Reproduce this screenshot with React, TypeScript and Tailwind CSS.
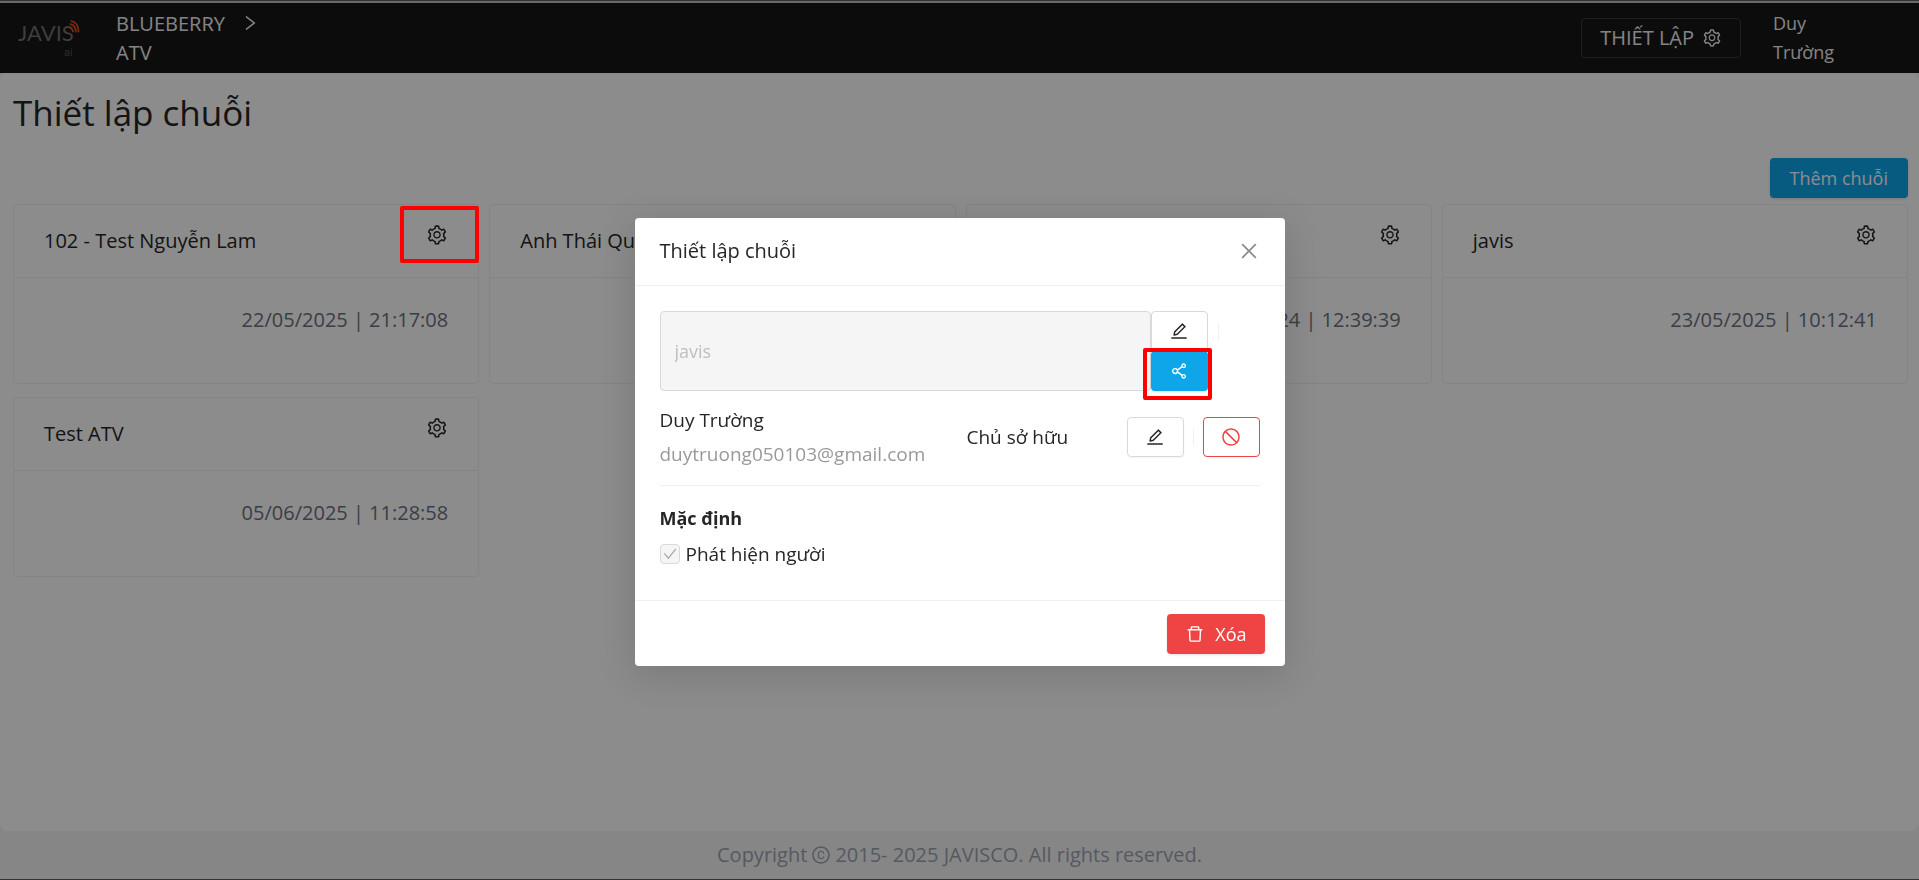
import { useState } from "react";
import {
  AiOutlineCheck,
  AiOutlineClose,
  AiOutlineCopyrightCircle,
  AiOutlineDelete,
  AiOutlineEdit,
  AiOutlineRight,
  AiOutlineSetting,
  AiOutlineShareAlt,
  AiOutlineStop,
} from "react-icons/ai";

type Chain = {
  id: number;
  name: string;
  createdAt: string;
  highlighted?: boolean;
};

const chains: Chain[] = [
  {
    id: 1,
    name: "102 - Test Nguyễn Lam",
    createdAt: "22/05/2025 | 21:17:08",
    highlighted: true,
  },
  { id: 2, name: "Anh Thái Quang", createdAt: "22/05/2025 | 09:20:15" },
  { id: 3, name: "Blueberry", createdAt: "18/12/2024 | 12:39:39" },
  { id: 4, name: "javis", createdAt: "23/05/2025 | 10:12:41" },
  { id: 5, name: "Test ATV", createdAt: "05/06/2025 | 11:28:58" },
];

function Logo() {
  return (
    <svg
      width="64"
      height="40"
      viewBox="0 0 64 40"
      fill="none"
      role="img"
      aria-label="JAVIS ai"
      className="shrink-0"
    >
      <text
        x="0"
        y="23"
        fontSize="22"
        fontFamily="Lato, sans-serif"
        fill="#707070"
      >
        JAVIS
      </text>
      <text
        x="46"
        y="38"
        fontSize="11"
        fontFamily="Roboto, sans-serif"
        fill="#505050"
      >
        ai
      </text>
      <g stroke="#e8491d" strokeWidth="1.8" strokeLinecap="round">
        <path d="M51.5 9.5c2 .6 3.200 2 3.500 4" />
        <path d="M52.500 6.200c3.300 .9 5.200 3.500 5.300 7.300" />
        <path d="M53.500 3c4.500 1.200 7 5 7 10.500" />
      </g>
    </svg>
  );
}

function Header() {
  return (
    <header className="flex h-[70px] items-center bg-[#161616] pb-px text-[#f0f0f0]">
      <div className="flex flex-1 items-center pl-[18px]">
        <Logo />
        <div className="ml-[34px] flex items-start">
          <span className="w-[124px] leading-[29px]">BLUEBERRY ATV</span>
          <AiOutlineRight className="mt-1 size-5" />
        </div>
      </div>
      <button className="flex h-10 items-center gap-2 rounded border border-[#3a3a3a] px-[18px]">
        THIẾT LẬP
        <AiOutlineSetting className="size-5" />
      </button>
      <span className="mr-[70px] ml-8 w-[76px] text-[18px] leading-[29px]">
        Duy Trường
      </span>
    </header>
  );
}

function ChainCard({ chain, onOpen }: { chain: Chain; onOpen: () => void }) {
  return (
    <article className="h-[180px] rounded border border-[#f0f0f0]">
      <div className="flex h-[73px] items-center justify-between border-b border-[#f0f0f0] px-[30px]">
        <h2>{chain.name}</h2>
        <button
          onClick={onOpen}
          aria-label={`Thiết lập ${chain.name}`}
          className="relative mb-3"
        >
          <AiOutlineSetting className="size-[22px]" />
          {chain.highlighted && (
            <span className="absolute -top-[18px] -right-[31px] -bottom-[17px] -left-[26px] z-20 rounded-xs border-4 border-[#ff0000]" />
          )}
        </button>
      </div>
      <p className="px-[30px] pt-[27px] text-right leading-[29px] text-[#6b7280]">
        {chain.createdAt}
      </p>
    </article>
  );
}

function SettingsModal({ onClose }: { onClose: () => void }) {
  return (
    <>
      <div className="fixed inset-0 z-10 bg-black/45" />
      <div className="fixed inset-0 z-30 flex items-center justify-center pt-[3px]">
        <div
          role="dialog"
          aria-labelledby="modal-title"
          className="w-[650px] rounded bg-white shadow-[0_8px_36px_4px_rgba(0,0,0,0.12)]"
        >
          <div className="flex h-[68px] items-center justify-between border-b border-[#f0f0f0] px-[25px]">
            <h2 id="modal-title">Thiết lập chuỗi</h2>
            <button
              onClick={onClose}
              aria-label="Đóng"
              className="text-[#8c8c8c]"
            >
              <AiOutlineClose className="size-[22px]" />
            </button>
          </div>

          <div className="px-[25px] pt-[25px] pb-7 text-[19px]">
            <div className="flex">
              <input
                type="text"
                value="javis"
                aria-label="Tên chuỗi"
                disabled
                className="min-w-0 flex-1 rounded border border-[#d9d9d9] bg-[#f5f5f5] px-3.5 text-[18px] text-[#bfbfbf]"
              />
              <div className="flex w-[57px] flex-col">
                <button
                  aria-label="Sửa tên"
                  className="flex h-10 items-center justify-center rounded border border-[#d9d9d9]"
                >
                  <AiOutlineEdit className="size-5" />
                </button>
                <button
                  aria-label="Chia sẻ"
                  className="relative flex h-10 items-center justify-center rounded bg-[#0ea5e9] text-white shadow-sm"
                >
                  <AiOutlineShareAlt className="size-5" />
                  <span className="absolute -top-[3px] -right-1 -bottom-[9px] -left-2 rounded-xs border-4 border-[#ff0000]" />
                </button>
              </div>
              <span className="mt-3 mr-[41px] ml-2.5 h-[18px] w-px bg-[#f0f0f0]" />
            </div>

            <div className="flex items-center border-b border-[#f0f0f0] pt-3 pb-3.5">
              <div className="flex-1 leading-[34px]">
                <p>Duy Trường</p>
                <p className="text-[#999999]">duytruong050103@gmail.com</p>
              </div>
              <p className="w-[160px]">Chủ sở hữu</p>
              <button
                aria-label="Sửa quyền"
                className="flex h-10 w-[57px] items-center justify-center rounded border border-[#d9d9d9] shadow-xs"
              >
                <AiOutlineEdit className="size-5" />
              </button>
              <span className="mx-[9px] h-[18px] w-px bg-[#f0f0f0]" />
              <button
                aria-label="Chặn"
                className="flex h-10 w-[57px] items-center justify-center rounded border border-[#ef4444] text-[#ef4444] shadow-xs"
              >
                <AiOutlineStop className="size-5" />
              </button>
            </div>

            <h3 className="mt-3.5 text-[18px] leading-9 font-bold">Mặc định</h3>
            <label className="flex items-center gap-1.5 leading-9">
              <span className="relative flex size-5 items-center justify-center">
                <input
                  type="checkbox"
                  checked
                  disabled
                  className="absolute inset-0 appearance-none rounded border border-[#d9d9d9] bg-[#f5f5f5]"
                />
                <AiOutlineCheck className="relative size-4 text-[#a6a6a6]" />
              </span>
              Phát hiện người
            </label>
          </div>

          <div className="flex justify-end border-t border-[#f0f0f0] px-5 pt-[13px] pb-3">
            <button className="flex h-10 items-center gap-2.5 rounded bg-[#ef4444] px-[18px] text-[18px] text-white shadow-sm">
              <AiOutlineDelete className="size-5" />
              Xóa
            </button>
          </div>
        </div>
      </div>
    </>
  );
}

export default function App() {
  const [modalOpen, setModalOpen] = useState(true);

  return (
    <div className="flex min-h-screen flex-col border-t border-b border-t-[#606060] border-b-[#606060] bg-[#f5f5f5] font-['Open_Sans',sans-serif] text-[20px] leading-[30px] text-[#262626]">
      <div className="h-0.5 bg-[#c0c0c0]" />
      <Header />

      <main className="flex-1 rounded-lg bg-white pr-[11px] pl-[13px]">
        <h1 className="pt-3 text-[35px] leading-[56px]">Thiết lập chuỗi</h1>
        <div className="mt-[17px] flex justify-end">
          <button className="h-10 rounded bg-[#0ea5e9] px-5 text-[18px] text-white shadow-sm">
            Thêm chuỗi
          </button>
        </div>
        <div className="mt-1.5 grid grid-cols-4 gap-x-2.5 gap-y-[13px]">
          {chains.map((chain) => (
            <ChainCard
              key={chain.id}
              chain={chain}
              onOpen={() => setModalOpen(true)}
            />
          ))}
        </div>
      </main>

      <footer className="flex h-12 items-center justify-center gap-1 text-[#9ca3af]">
        Copyright
        <AiOutlineCopyrightCircle className="size-5" />
        2015- 2025 JAVISCO. All rights reserved.
      </footer>

      {modalOpen && <SettingsModal onClose={() => setModalOpen(false)} />}
    </div>
  );
}
